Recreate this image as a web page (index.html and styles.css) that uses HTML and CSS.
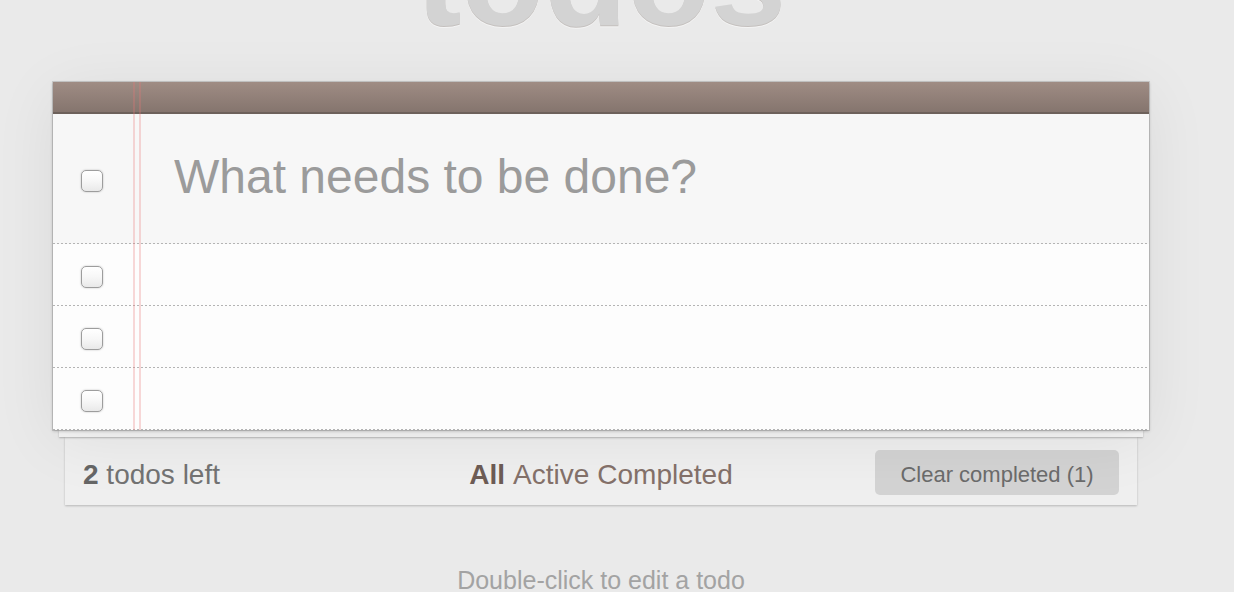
FILE: index.html
```html
<!DOCTYPE html>
<html lang="en">
<head>
  <meta charset="UTF-8" />
  <title>Todos</title>
  <link rel="stylesheet" href="styles.css">
</head>
<body>
  <div class="todoapp">
    <h1 class="title">todos</h1>

    <div class="card">
      <div class="card-header"></div>

      <!-- New todo -->
      <div class="new-row">
        <input type="checkbox" class="check">
        <input type="text" class="new-todo" placeholder="What needs to be done?">
      </div>

      <ul class="todo-list">
        <li class="todo"><input type="checkbox" class="check"><label></label></li>
        <li class="todo"><input type="checkbox" class="check"><label></label></li>
        <li class="todo"><input type="checkbox" class="check"><label></label></li>
      </ul>

      <div class="margin-lines"></div>
    </div>

    <div class="paper"></div>

    <div class="footer">
      <span class="count"><strong>2</strong> todos left</span>
      <div class="filters">
        <a href="#" class="selected">All</a>
        <a href="#">Active</a>
        <a href="#">Completed</a>
      </div>
      <button class="clear">Clear completed (1)</button>
    </div>

    <p class="info">Double-click to edit a todo</p>
  </div>
</body>
</html>
```

FILE: styles.css
```css
* {
  box-sizing: border-box;
}

body {
  margin: 0;
  background: #eaeaea;
  font-family: 'Liberation Sans', Arial, sans-serif;
  overflow: hidden;
}

.todoapp {
  width: 1096px;
  margin-left: 53px;
}

.title {
  margin: -90px 0 36px;
  height: 136px;
  font-size: 136px;
  line-height: 1;
  font-weight: bold;
  text-align: center;
  color: #d3d3d3;
  text-shadow: 0 1px 0 #c4c0be, 0 2px 0 #f4f4f4;
}

.card {
  position: relative;
  z-index: 3;
  background: #fff;
  box-shadow: 0 0 0 1px rgba(0, 0, 0, 0.12), 0 1px 3px rgba(0, 0, 0, 0.25), 0 10px 60px rgba(0, 0, 0, 0.07);
}

.card-header {
  height: 32px;
  background: linear-gradient(#9f8c84, #85756e);
  border-bottom: 2px solid #6d615b;
}

.new-row {
  display: flex;
  align-items: center;
  height: 130px;
  padding-top: 4px;
  background: linear-gradient(to right, #b4b4b4 2px, transparent 2px) left bottom / 4px 1px repeat-x, #f7f7f7;
}

.check {
  appearance: none;
  -webkit-appearance: none;
  flex: none;
  width: 22px;
  height: 22px;
  margin: 0 0 0 28px;
  border: 1px solid #9d9d9d;
  border-radius: 5px;
  background: linear-gradient(#ffffff, #f7f7f7 50%, #e9e9e9);
  box-shadow: 0 0 2px rgba(0, 0, 0, 0.25), inset 0 1px 0 #fff;
}

.new-todo {
  flex: 1;
  margin: -8px 0 0 71px;
  padding: 0;
  border: none;
  outline: none;
  background: transparent;
  font-family: inherit;
  font-size: 48px;
  line-height: 1.15;
  color: #555;
}

.new-todo::placeholder {
  color: #9b9b9b;
}

.todo-list {
  list-style: none;
  margin: 0;
  padding: 0;
}

.todo {
  display: flex;
  align-items: center;
  height: 62px;
  padding-top: 3px;
  background: linear-gradient(to right, #b4b4b4 2px, transparent 2px) left bottom / 4px 1px repeat-x, #fdfdfd;
}

.margin-lines {
  position: absolute;
  top: 0;
  bottom: 0;
  left: 80px;
  width: 8px;
  border-left: 2px solid rgba(232, 120, 120, 0.28);
  border-right: 2px solid rgba(232, 120, 120, 0.28);
}

.paper {
  position: relative;
  z-index: 2;
  height: 7px;
  margin: 0 6px;
  background: #f4f4f4;
  box-shadow: 0 1px 2px rgba(0, 0, 0, 0.25);
}

.footer {
  position: relative;
  z-index: 1;
  display: grid;
  grid-template-columns: 1fr auto 1fr;
  align-items: center;
  height: 68px;
  margin: 0 12px;
  padding: 4px 18px 0;
  background: #efefef;
  box-shadow: 0 1px 2px rgba(0, 0, 0, 0.22);
  font-size: 28px;
  color: #737373;
}

.count,
.filters {
  padding-top: 3px;
}

.count strong {
  color: #666;
}

.filters {
  display: flex;
  gap: 8px;
}

.filters a {
  color: #84716a;
  text-decoration: none;
}

.filters a.selected {
  font-weight: bold;
  color: #6d5c55;
}

.clear {
  justify-self: end;
  width: 244px;
  height: 45px;
  margin-top: -1px;
  padding: 4px 0 0;
  border: none;
  border-radius: 5px;
  background: #d3d3d3;
  font-family: inherit;
  font-size: 22px;
  color: #6b6b6b;
  cursor: pointer;
}

.info {
  margin: 60px 0 0;
  font-size: 25px;
  line-height: 1.2;
  text-align: center;
  color: #a3a3a3;
}
```
